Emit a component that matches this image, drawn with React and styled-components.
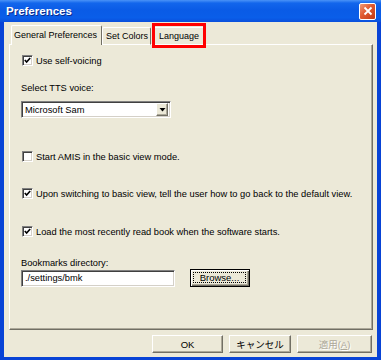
import React from 'react'
import styled, { createGlobalStyle } from 'styled-components'

const GlobalStyle = createGlobalStyle`
  html, body {
    margin: 0;
    padding: 0;
  }
  body {
    font-family: "Liberation Sans", Arial, sans-serif;
    font-size: 9.3px;
    color: #000;
  }
`

const sunken = `
  border: 1px solid;
  border-color: #808080 #ffffff #ffffff #808080;
  box-shadow: inset 1px 1px #404040, inset -1px -1px #d4d0c8;
`

const raised = `
  border: 1px solid;
  border-color: #ffffff #716f64 #716f64 #ffffff;
  box-shadow: inset -1px -1px #aca899;
`

const Check = ({ on }) => (
  <CheckBox>
    {on && (
      <svg width="7" height="7" viewBox="0 0 7 7">
        <polyline points="0.8,3 2.6,5 6.2,1" fill="none" stroke="#000" strokeWidth="1.6" />
      </svg>
    )}
  </CheckBox>
)

const Home = () => {
  return (
    <Window>
      <GlobalStyle />
      <TitleBar>
        <Title>Preferences</Title>
        <CloseBtn>
          <svg width="10" height="10" viewBox="0 0 10 10">
            <path d="M1.5 1.5 L8.5 8.5 M8.5 1.5 L1.5 8.5" stroke="#fff" strokeWidth="1.8" />
          </svg>
        </CloseBtn>
      </TitleBar>

      <Client>
        <TabStrip>
          <Tab selected>General Preferences</Tab>
          <Tab>Set Colors</Tab>
          <Tab marked>Language</Tab>
        </TabStrip>

        <Panel>
          <CheckRow top={9}>
            <Check on />
            <span>Use self-voicing</span>
          </CheckRow>

          <Label top={15}>Select TTS voice:</Label>
          <Select top={7}>
            <span>Microsoft Sam</span>
            <DropBtn>
              <svg width="7" height="4" viewBox="0 0 7 4">
                <path d="M0.5 0 H6.5 L3.5 3.5 Z" fill="#000" />
              </svg>
            </DropBtn>
          </Select>

          <CheckRow top={32}>
            <Check />
            <span>Start AMIS in the basic view mode.</span>
          </CheckRow>

          <CheckRow top={24}>
            <Check on />
            <span>Upon switching to basic view, tell the user how to go back to the default view.</span>
          </CheckRow>

          <CheckRow top={25}>
            <Check on />
            <span>Load the most recently read book when the software starts.</span>
          </CheckRow>

          <Label top={19}>Bookmarks directory:</Label>
          <InputRow>
            <TextInput>./settings/bmk</TextInput>
            <DefaultButton>
              <Focus>Browse...</Focus>
            </DefaultButton>
          </InputRow>
        </Panel>

        <Footer>
          <Button w={71}>OK</Button>
          <Button w={62} cjk>キャンセル</Button>
          <Button w={75} cjk disabled>
            適用(<u>A</u>)
          </Button>
        </Footer>
      </Client>
    </Window>
  )
}

export default Home

const Window = styled.div`
  width: 381px;
  height: 360px;
  display: flex;
  flex-direction: column;
  background: #0843d6;
  overflow: hidden;
`

const TitleBar = styled.div`
  height: 22px;
  flex: none;
  display: flex;
  align-items: center;
  justify-content: space-between;
  padding: 0 5px 0 6px;
  background: linear-gradient(
    to bottom,
    #4a93f7 0%,
    #1266ec 14%,
    #0a5be6 45%,
    #0a5ee9 80%,
    #0a4fdc 100%
  );
`

const Title = styled.div`
  color: #fff;
  font-weight: bold;
  font-size: 11.5px;
  text-shadow: 1px 1px #0a2a8a;
`

const CloseBtn = styled.div`
  width: 15px;
  height: 15px;
  border: 1px solid #fff;
  border-radius: 2px;
  display: flex;
  align-items: center;
  justify-content: center;
  background: linear-gradient(135deg, #f09a78 0%, #e05a30 45%, #c23a14 100%);
`

const Client = styled.div`
  flex: 1;
  margin: 0 4px 3px 4px;
  background: #ece9d8;
  display: flex;
  flex-direction: column;
  padding: 0 4px 0 5px;
`

const TabStrip = styled.div`
  height: 23px;
  display: flex;
  align-items: flex-end;
  padding-left: 2px;
  margin-bottom: -1px;
  position: relative;
  z-index: 1;
  font-size: 9px;
`

const Tab = styled.div`
  position: relative;
  height: ${p => (p.selected ? '18px' : '16px')};
  display: flex;
  align-items: center;
  padding: ${p => (p.selected ? '0 4px 1px 2px' : '0 2px 0 3px')};
  margin-right: ${p => (p.selected ? '0' : '1px')};
  background: #ece9d8;
  border-top: 1px solid #fff;
  border-left: 1px solid #fff;
  border-right: 1px solid #716f64;
  border-radius: 2px 2px 0 0;
  ${p => !p.selected && 'border-bottom: 1px solid #fff;'}
  white-space: nowrap;

  ${p =>
    p.marked &&
    `
    padding: 0 6px 0 6px;
    &::after {
      content: '';
      position: absolute;
      left: -1px;
      right: -1px;
      top: -5px;
      bottom: -4px;
      border: 3px solid #f00;
    }
  `}
`

const Panel = styled.div`
  flex: 1;
  display: flex;
  flex-direction: column;
  padding-left: 11px;
  border: 1px solid;
  border-color: #fff #716f64 #716f64 #fff;
  box-shadow: inset -1px -1px #aca899;
`

const CheckRow = styled.div`
  display: flex;
  align-items: center;
  height: 13px;
  gap: 3px;
  margin-top: ${p => p.top}px;
  margin-left: 1px;
  white-space: nowrap;
`

const CheckBox = styled.div`
  width: 11px;
  height: 11px;
  box-sizing: border-box;
  flex: none;
  background: #fff;
  ${sunken}
  display: flex;
  align-items: center;
  justify-content: center;
`

const Label = styled.div`
  height: 12px;
  line-height: 12px;
  margin-top: ${p => p.top}px;
`

const Select = styled.div`
  width: 150px;
  height: 17px;
  box-sizing: border-box;
  margin-top: ${p => p.top}px;
  background: #fff;
  ${sunken}
  display: flex;
  align-items: center;
  justify-content: space-between;
  padding: 2px 2px 2px 3px;
`

const DropBtn = styled.div`
  width: 12px;
  height: 13px;
  box-sizing: border-box;
  background: #ece9d8;
  ${raised}
  display: flex;
  align-items: center;
  justify-content: center;
`

const InputRow = styled.div`
  display: flex;
  align-items: center;
  gap: 15px;
`

const TextInput = styled.div`
  width: 154px;
  height: 17px;
  box-sizing: border-box;
  background: #fff;
  ${sunken}
  display: flex;
  align-items: center;
  padding-left: 3px;
`

const DefaultButton = styled.div`
  width: 60px;
  height: 18px;
  box-sizing: border-box;
  border: 1px solid #000;
  background: #ece9d8;
  box-shadow: inset 1px 1px #fff, inset -1px -1px #716f64, inset -2px -2px #aca899;
  padding: 2px 3px 3px 2px;
  display: flex;
`

const Focus = styled.div`
  flex: 1;
  border: 1px dotted #000;
  display: flex;
  align-items: center;
  justify-content: center;
  font-size: 9.5px;
`

const Footer = styled.div`
  height: 26px;
  flex: none;
  display: flex;
  align-items: center;
  justify-content: flex-end;
  gap: 6px;
  padding-top: 1px;
  padding-right: 1px;
`

const Button = styled.div`
  width: ${p => p.w}px;
  height: 18px;
  box-sizing: border-box;
  background: #ece9d8;
  ${raised}
  display: flex;
  align-items: center;
  justify-content: center;
  font-family: ${p =>
    p.cjk
      ? '"Liberation Sans", "Noto Sans CJK JP", sans-serif'
      : '"Liberation Sans", Arial, sans-serif'};
  font-size: 9.5px;
  color: ${p => (p.disabled ? '#aca899' : '#000')};
  text-shadow: ${p => (p.disabled ? '1px 1px #fff' : 'none')};
`
